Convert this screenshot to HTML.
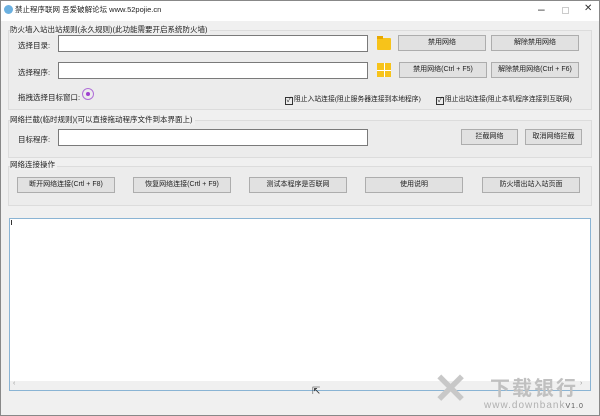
<!DOCTYPE html>
<html><head><meta charset="utf-8"><style>
*{margin:0;padding:0;box-sizing:border-box}
body{width:600px;height:416px;overflow:hidden;background:#f0f0f0;font-family:"Liberation Sans","Noto Sans CJK SC",sans-serif;font-size:7.5px;color:#222;position:relative}
.a{position:absolute;white-space:nowrap}
.win{position:absolute;left:0;top:0;width:600px;height:416px;border:1px solid #888}
.title{position:absolute;left:1px;top:1px;width:598px;height:20px;background:#fff}
.grp{position:absolute;border:1px solid #dcdcdc;background:#ececec}
.inp{position:absolute;background:#fff;border:1px solid #7a7a7a;height:17px}
.btn{position:absolute;background:#e1e1e1;border:1px solid #adadad;height:16px;text-align:center;line-height:14px;font-size:7px}
.cb{display:inline-block;width:8px;height:8px;border:1px solid #333;vertical-align:-1px;margin-right:1px;font-size:7px;line-height:6px;text-align:center}
</style></head><body>
<div class="title"></div>
<div class="win"></div>
<div class="a" style="left:4px;top:5px;width:9px;height:9px;border-radius:50%;background:#6ab0e0"></div>
<div class="a" style="left:15px;top:4px;font-size:7.5px">禁止程序联网 吾爱破解论坛 www.52pojie.cn</div>
<div class="a" style="left:538px;top:2px;font-size:12px;color:#333">–</div>
<div class="a" style="left:562px;top:7px;width:7px;height:7px;border:1px solid #ccc"></div>
<div class="a" style="left:584px;top:3px;font-size:10px;color:#333">✕</div>

<div class="grp" style="left:8px;top:30px;width:584px;height:80px"></div>
<div class="a" style="left:10px;top:24px;background:#f0f0f0;padding-right:2px">防火墙入站出站规则(永久规则)(此功能需要开启系统防火墙)</div>
<div class="a" style="left:18px;top:40px">选择目录:</div>
<div class="inp" style="left:58px;top:35px;width:310px"></div>
<div class="a" style="left:377px;top:38px;width:14px;height:12px;background:#f7c31a;border-radius:1px"></div>
<div class="a" style="left:377px;top:36px;width:6px;height:3px;background:#e8a800"></div>
<div class="btn" style="left:398px;top:35px;width:88px">禁用网络</div>
<div class="btn" style="left:491px;top:35px;width:88px">解除禁用网络</div>
<div class="a" style="left:18px;top:67px">选择程序:</div>
<div class="inp" style="left:58px;top:62px;width:310px"></div>
<div class="a" style="left:377px;top:63px;width:14px;height:14px;background:#f7c31a"></div>
<div class="a" style="left:384px;top:63px;width:1px;height:14px;background:#fff"></div>
<div class="a" style="left:377px;top:70px;width:14px;height:1px;background:#fff"></div>
<div class="btn" style="left:399px;top:62px;width:88px">禁用网络(Ctrl + F5)</div>
<div class="btn" style="left:491px;top:62px;width:88px">解除禁用网络(Ctrl + F6)</div>
<div class="a" style="left:18px;top:92px">拖拽选择目标窗口:</div>
<div class="a" style="left:82px;top:88px;width:12px;height:12px;border:1.5px solid #b070d8;border-radius:50%"></div>
<div class="a" style="left:86px;top:92px;width:4px;height:4px;background:#a040d0;border-radius:50%"></div>
<div class="a" style="left:285px;top:93px;font-size:6.8px"><span class="cb">✓</span>阻止入站连接(阻止服务器连接到本地程序)</div>
<div class="a" style="left:436px;top:93px;font-size:6.8px"><span class="cb">✓</span>阻止出站连接(阻止本机程序连接到互联网)</div>

<div class="grp" style="left:8px;top:120px;width:584px;height:38px"></div>
<div class="a" style="left:10px;top:114px;background:#f0f0f0;padding-right:2px">网络拦截(临时规则)(可以直接拖动程序文件到本界面上)</div>
<div class="a" style="left:18px;top:134px">目标程序:</div>
<div class="inp" style="left:58px;top:129px;width:310px"></div>
<div class="btn" style="left:461px;top:129px;width:57px">拦截网络</div>
<div class="btn" style="left:525px;top:129px;width:57px">取消网络拦截</div>

<div class="grp" style="left:8px;top:166px;width:584px;height:40px"></div>
<div class="a" style="left:10px;top:159px;background:#f0f0f0;padding-right:2px">网络连接操作</div>
<div class="btn" style="left:17px;top:177px;width:98px">断开网络连接(Crtl + F8)</div>
<div class="btn" style="left:133px;top:177px;width:98px">恢复网络连接(Crtl + F9)</div>
<div class="btn" style="left:249px;top:177px;width:98px">测试本程序是否联网</div>
<div class="btn" style="left:365px;top:177px;width:98px">使用说明</div>
<div class="btn" style="left:482px;top:177px;width:98px">防火墙出站入站页面</div>

<div class="a" style="left:9px;top:218px;width:582px;height:173px;background:#fff;border:1px solid #8ab4d4"></div>
<div class="a" style="left:10px;top:381px;width:580px;height:9px;background:#f0f0f0"></div>
<div class="a" style="left:13px;top:380px;font-size:7px;color:#999">‹</div>
<div class="a" style="left:580px;top:380px;font-size:7px;color:#999">›</div>
<div class="a" style="left:11px;top:220px;width:1px;height:5px;background:#333"></div>

<div class="a" style="left:433px;top:368px;font-size:42px;font-weight:bold;color:#c8c8c8;line-height:42px">✕</div>
<div class="a" style="left:490px;top:372px;font-size:20px;font-weight:bold;color:#c0c0c0;letter-spacing:2px">下载银行</div>
<div class="a" style="left:484px;top:400px;font-size:10px;color:#b0b0b0;letter-spacing:1px">www.downbank<span style="color:#555;font-size:7px">V1.0</span></div>
<div class="a" style="left:312px;top:386px;font-size:10px;color:#333">⇱</div>
</body></html>
